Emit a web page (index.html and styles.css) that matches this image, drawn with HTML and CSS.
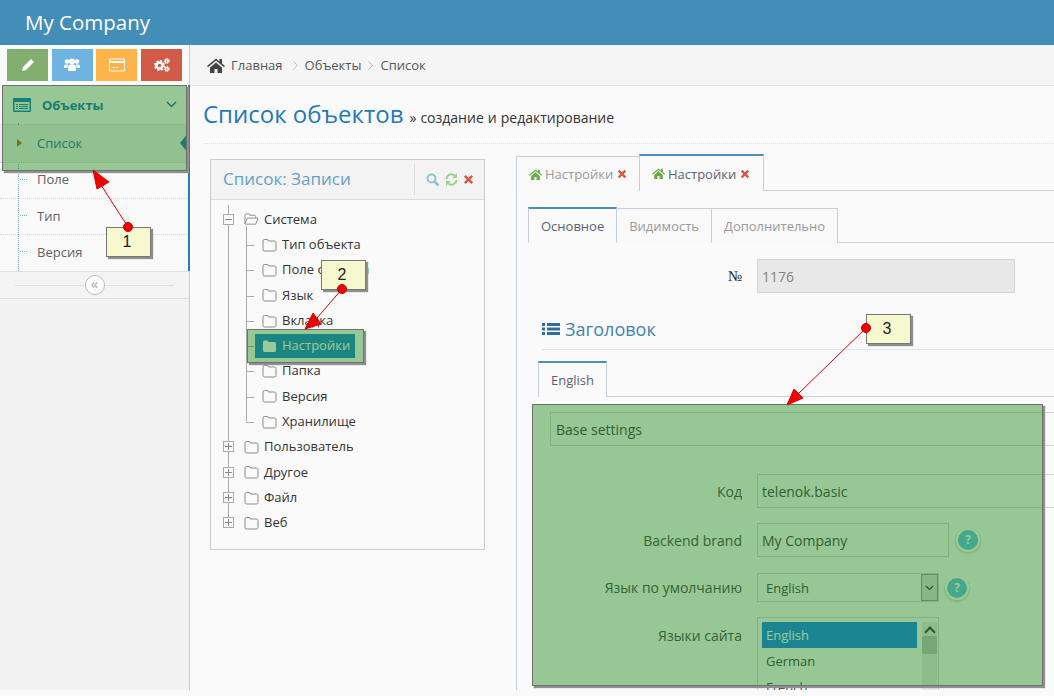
FILE: index.html
```html
<!DOCTYPE html>
<html lang="ru">
<head>
  <meta charset="UTF-8">
  <title>My Company</title>
  <link rel="stylesheet" href="styles.css">
</head>
<body>
  <svg class="icon-defs" width="0" height="0">
    <symbol id="i-folder" viewBox="0 0 15 14"><path d="M1 3.200q0-1.700 1.500-1.700h2.600q1.200 0 1.400 1.500h6q1.500 0 1.500 1.500v7q0 1.500-1.500 1.500h-10q-1.500 0-1.500-1.500z" fill="none" stroke="#8a8a8a"/></symbol>
    <symbol id="i-folder-solid" viewBox="0 0 15 14"><path d="M1 3.200q0-1.700 1.500-1.700h2.600q1.200 0 1.400 1.500h6q1.500 0 1.500 1.500v7q0 1.500-1.500 1.500h-10q-1.500 0-1.500-1.500z" fill="#fff"/></symbol>
    <symbol id="i-home" viewBox="0 0 18 15"><path d="M9 0.500 0 8l1 1.200L9 2.600l8 6.600L18 8l-3-2.500V1h-2.500v2.400zM3 9.500V15h4.500v-4h3v4H15V9.500L9 4.500z"/></symbol>
    <symbol id="i-times" viewBox="0 0 12 12"><path d="M3 1 6 4l3-3 2 2-3 3 3 3-2 2-3-3-3 3-2-2 3-3-3-3z"/></symbol>
    <symbol id="i-crumb" viewBox="0 0 5 9"><path d="M.5.5l4 4-4 4" fill="none" stroke="#bbb"/></symbol>
  </svg>

  <header class="navbar">My Company</header>

  <div class="layout">
    <aside class="sidebar">
      <div class="shortcuts">
        <span class="shortcut green">
          <svg width="14" height="14" viewBox="0 0 14 14"><path d="M10 1l3 3-8 8-4 1 1-4z" fill="#fff"/></svg>
        </span>
        <span class="shortcut blue">
          <svg width="16" height="14" viewBox="0 0 16 14"><g fill="#fff"><circle cx="3" cy="3.500" r="2.300"/><circle cx="13" cy="3.500" r="2.300"/><circle cx="8" cy="3.500" r="3"/><path d="M0 10V8q0-1.500 2-1.500h2L3 10zM16 10V8q0-1.500-2-1.500h-2l1 3.500zM4 13V9q0-2.500 2.500-2.500h3Q12 6.500 12 9v4z"/></g></svg>
        </span>
        <span class="shortcut orange">
          <svg width="16" height="14" viewBox="0 0 16 14"><path d="M.5 1h15v12H.5z" fill="none" stroke="#fff"/><path d="M1 3h14v2H1zM3 9h3v1H3zM7 9h2v1H7z" fill="#fff"/></svg>
        </span>
        <span class="shortcut red">
          <svg width="16" height="14" viewBox="0 0 16 14"><g fill="none" stroke="#fff"><circle cx="5.500" cy="7.500" r="3" stroke-width="2.400"/><circle cx="5.500" cy="7.500" r="4.700" stroke-width="1.600" stroke-dasharray="2 1.700"/><circle cx="12.800" cy="3" r="1.500" stroke-width="1.500"/><circle cx="12.800" cy="3" r="2.600" stroke-width="1" stroke-dasharray="1.200 1.200"/><circle cx="12.800" cy="11" r="1.500" stroke-width="1.500"/><circle cx="12.800" cy="11" r="2.600" stroke-width="1" stroke-dasharray="1.200 1.200"/></g></svg>
        </span>
      </div>

      <nav class="side-nav">
        <div class="nav-head">
          <svg class="nav-head-icon" width="18" height="14" viewBox="0 0 18 14"><path d="M1 0h16q1 0 1 1v12q0 1-1 1H1q-1 0-1-1V1q0-1 1-1zM1.500 4v8.500h15V4zM3 6h2v1H3zM6 6h9v1H6zM3 8h2v1H3zM6 8h9v1H6zM3 10h2v1H3zM6 10h9v1H6z" fill="#2283c5" fill-rule="evenodd"/></svg>
          <b>Объекты</b>
          <svg class="nav-chevron" width="11" height="7" viewBox="0 0 11 7"><path d="M1 1l4.500 4.500L10 1" fill="none" stroke="#3a6ea0" stroke-width="1.500"/></svg>
        </div>
        <ul class="sub-nav">
          <li class="active">Список</li>
          <li>Поле</li>
          <li class="low">Тип</li>
          <li class="low">Версия</li>
        </ul>
      </nav>

      <div class="side-toggle"><span class="toggle-btn">«</span></div>
    </aside>

    <main class="content">
      <div class="breadcrumbs">
        <svg class="crumb-home" width="18" height="15"><use href="#i-home"/></svg>
        <span>Главная</span>
        <svg class="crumb-sep wide" width="5" height="9"><use href="#i-crumb"/></svg>
        <span>Объекты</span>
        <svg class="crumb-sep" width="5" height="9"><use href="#i-crumb"/></svg>
        <span>Список</span>
      </div>

      <div class="page-head">
        <h1>Список объектов</h1>
        <small>» создание и редактирование</small>
      </div>

      <div class="columns">
        <section class="tree-box">
          <div class="tree-title">
            <h4>Список: Записи</h4>
            <div class="tree-tools">
              <svg width="14" height="14" viewBox="0 0 14 14"><circle cx="5.500" cy="5.500" r="4" fill="none" stroke="#8fc3d9" stroke-width="2"/><path d="M8.500 8.500l4 4" stroke="#8fc3d9" stroke-width="2.500"/></svg>
              <svg width="13" height="13" viewBox="0 0 13 13"><g fill="none" stroke="#9ed08f" stroke-width="2"><path d="M1.500 6A5 5 0 0 1 10 2.800"/><path d="M11.500 7A5 5 0 0 1 3 10.200"/></g><path d="M12 0v5H7zM1 13V8h5z" fill="#9ed08f"/></svg>
              <svg class="times" width="11" height="11"><use href="#i-times"/></svg>
            </div>
          </div>

          <ul class="tree">
            <li class="node open">
              <span class="toggle minus"></span>
              <svg class="folder" width="15" height="14" viewBox="0 0 16 14"><path d="M1 12V3q0-1.500 1.500-1.500h2.500q1 0 1.300 1.500h4.700q1.500 0 1.500 1.500V6M1 12l2.500-6H15l-2.500 6.500H2q-1 0-1-.5z" fill="none" stroke="#8a8a8a"/></svg>
              Система
            </li>
            <li>
              <ul class="tree-sub">
                <li class="node"><svg class="folder" width="15" height="14"><use href="#i-folder"/></svg>Тип объекта</li>
                <li class="node"><svg class="folder" width="15" height="14"><use href="#i-folder"/></svg>Поле объекта</li>
                <li class="node"><svg class="folder" width="15" height="14"><use href="#i-folder"/></svg>Язык</li>
                <li class="node"><svg class="folder" width="15" height="14"><use href="#i-folder"/></svg>Вкладка</li>
                <li class="node"><span class="selected"><svg class="folder" width="15" height="14"><use href="#i-folder-solid"/></svg>Настройки</span></li>
                <li class="node"><svg class="folder" width="15" height="14"><use href="#i-folder"/></svg>Папка</li>
                <li class="node"><svg class="folder" width="15" height="14"><use href="#i-folder"/></svg>Версия</li>
                <li class="node"><svg class="folder" width="15" height="14"><use href="#i-folder"/></svg>Хранилище</li>
              </ul>
            </li>
            <li class="node"><span class="toggle"></span><svg class="folder" width="15" height="14"><use href="#i-folder"/></svg>Пользователь</li>
            <li class="node"><span class="toggle"></span><svg class="folder" width="15" height="14"><use href="#i-folder"/></svg>Другое</li>
            <li class="node"><span class="toggle"></span><svg class="folder" width="15" height="14"><use href="#i-folder"/></svg>Файл</li>
            <li class="node"><span class="toggle"></span><svg class="folder" width="15" height="14"><use href="#i-folder"/></svg>Веб</li>
          </ul>
        </section>

        <section class="editor">
          <div class="tabs top-tabs">
            <span class="tab">
              <svg class="tab-home" width="13" height="11"><use href="#i-home"/></svg>Настройки<svg class="times" width="10" height="10"><use href="#i-times"/></svg>
            </span>
            <span class="tab active">
              <svg class="tab-home" width="13" height="11"><use href="#i-home"/></svg>Настройки<svg class="times" width="10" height="10"><use href="#i-times"/></svg>
            </span>
          </div>

          <div class="editor-body">
            <div class="tabs inner-tabs">
              <span class="tab active">Основное</span>
              <span class="tab">Видимость</span>
              <span class="tab">Дополнительно</span>
            </div>

            <div class="form-row number-row">
              <label>№</label>
              <input class="field number" value="1176" disabled>
            </div>

            <h3 class="section-title">
              <svg width="18" height="14" viewBox="0 0 18 14"><path d="M0 1h3v3H0zM5 1h13v3H5zM0 5.500h3v3H0zM5 5.500h13v3H5zM0 10h3v3H0zM5 10h13v3H5z" fill="#2e6da4"/></svg>
              Заголовок
            </h3>

            <div class="tabs lang-tabs">
              <span class="tab active">English</span>
            </div>

            <div class="lang-body">
              <input class="field heading" value="Base settings">

              <div class="form-row code-row">
                <label>Код</label>
                <input class="field wide" value="telenok.basic">
              </div>

              <div class="form-row brand-row">
                <label>Backend brand</label>
                <input class="field brand" value="My Company">
                <span class="help">?</span>
              </div>

              <div class="form-row select-row">
                <label>Язык по умолчанию</label>
                <div class="select">
                  English
                  <span class="select-arrow"><svg width="9" height="6" viewBox="0 0 9 6"><path d="M1 1l3.500 3.500L8 1" fill="none" stroke="#444" stroke-width="1.200"/></svg></span>
                </div>
                <span class="help">?</span>
              </div>

              <div class="form-row list-row">
                <label>Языки сайта</label>
                <div class="listbox">
                  <ul class="options">
                    <li class="picked">English</li>
                    <li>German</li>
                    <li>French</li>
                  </ul>
                  <div class="scroll"><span class="scroll-up"></span><span class="scroll-thumb"></span></div>
                </div>
              </div>
            </div>
          </div>
        </section>
      </div>
    </main>
  </div>

  <!-- annotations drawn over the screenshot -->
  <div class="mark mark-nav"></div>
  <div class="mark mark-tree"></div>
  <div class="mark mark-form"></div>

  <svg class="arrows" width="1054" height="696" viewBox="0 0 1054 696">
    <g stroke="#e00000" fill="#f00000">
      <path d="M128 227 101 185"/>
      <path d="M93 170 97 189 109 182z"/>
      <path d="M342 289 317 318"/>
      <path d="M305 329 313 313 321 324z"/>
      <path d="M866 328 798 394"/>
      <path d="M787 405 794 389 803 398z"/>
    </g>
  </svg>

  <div class="note note-1">1</div>
  <div class="note note-2">2</div>
  <div class="note note-3">3</div>
  <svg class="dots" width="1054" height="696" viewBox="0 0 1054 696">
    <g fill="#f00000" stroke="#c00000">
      <circle cx="128" cy="227" r="4.500"/>
      <circle cx="342" cy="289" r="4.500"/>
      <circle cx="866" cy="328" r="4.500"/>
    </g>
  </svg>
</body>
</html>
```

FILE: styles.css
```css
* {
  margin: 0;
  padding: 0;
  box-sizing: border-box;
}

html, body {
  height: 696px;
  overflow: hidden;
}

body {
  position: relative;
  background: #fafafa;
  color: #393939;
  font-family: "Open Sans", sans-serif;
  font-size: 13px;
}

ul {
  list-style: none;
}

.icon-defs {
  position: absolute;
}

/* Top bar */
.navbar {
  height: 45px;
  padding: 8px 0 0 25px;
  background: #438eb9;
  color: #fff;
  font-size: 20.500px;
  line-height: 28px;
}

.layout {
  display: flex;
  height: 645px;
  overflow: hidden;
}

/* Sidebar */
.sidebar {
  flex: 0 0 190px;
  background: #f2f2f2;
  border-right: 1px solid #ccc;
}

.shortcuts {
  display: flex;
  height: 40px;
  padding: 4px 0 0 7px;
  gap: 3.700px;
  background: #fafafa;
}

.shortcut {
  display: flex;
  align-items: center;
  justify-content: center;
  width: 41px;
  height: 32px;
}

.green { background: #82af6f; }
.blue { background: #6fb3e0; }
.orange { background: #ffb44b; }
.red { background: #d15b47; }

.side-nav {
  border-right: 2px solid #2b7dbc;
  margin-right: -1px;
  background: #fafafa;
}

.nav-head {
  display: flex;
  align-items: center;
  height: 40px;
  padding: 0 11px 0 13px;
  border-bottom: 1px solid #e5e5e5;
  color: #2b7dbc;
}

.nav-head-icon {
  margin-right: 11px;
}

.nav-chevron {
  margin-left: auto;
}

.sub-nav {
  position: relative;
}

.sub-nav::before {
  content: "";
  position: absolute;
  left: 18px;
  top: -2px;
  bottom: 0;
  border-left: 1px dotted #6fb3e0;
}

.sub-nav li {
  position: relative;
  height: 36px;
  padding-left: 37px;
  border-bottom: 1px dotted #d5d5d5;
  color: #616161;
  line-height: 33px;
}

.sub-nav .low {
  line-height: 35px;
}

.sub-nav li:last-child {
  border-bottom: 0;
}

.sub-nav li::before {
  content: "";
  position: absolute;
  left: 20px;
  top: 16px;
  width: 7px;
  border-top: 1px dotted #6fb3e0;
}

.sub-nav .active {
  height: 38px;
  background: #f0f0f0;
  color: #2b7dbc;
  line-height: 36px;
}

.sub-nav .active::before {
  left: 17px;
  top: 14px;
  width: 0;
  border: 0;
  border-left: 5px solid #c87020;
  border-top: 4px solid transparent;
  border-bottom: 4px solid transparent;
}

.sub-nav .active::after {
  content: "";
  position: absolute;
  right: 0;
  top: 8px;
  border: 10px solid transparent;
  border-left: 0;
  border-right: 8px solid #2b7dbc;
}

.side-toggle {
  position: relative;
  display: flex;
  justify-content: center;
  align-items: center;
  height: 28px;
  background: #f3f3f3;
  border-top: 1px solid #e0e0e0;
  border-bottom: 1px solid #e0e0e0;
}

.side-toggle::before {
  content: "";
  position: absolute;
  left: 15px;
  right: 15px;
  top: 13px;
  border-top: 1px solid #e0e0e0;
}

.toggle-btn {
  position: relative;
  width: 20px;
  height: 20px;
  border: 1px solid #bbb;
  border-radius: 50%;
  background: #fff;
  color: #aaa;
  font-size: 15px;
  line-height: 15px;
  text-align: center;
}

/* Main column */
.content {
  flex: 1;
  min-width: 0;
  overflow: hidden;
}

.breadcrumbs {
  display: flex;
  align-items: center;
  height: 41px;
  padding-left: 17px;
  background: #f5f5f5;
  border-bottom: 1px solid #e5e5e5;
  color: #555;
}

.crumb-home {
  margin-right: 6px;
  fill: #444;
}

.crumb-sep {
  margin: 0 7px;
}

.crumb-sep.wide {
  margin: 0 7px 0 10px;
}

.page-head {
  display: flex;
  align-items: baseline;
  gap: 6px;
  height: 58px;
  margin-left: 13px;
  padding-top: 11px;
  border-bottom: 1px dotted #e2e2e2;
}

.page-head h1 {
  color: #2679b5;
  font-size: 24px;
  font-weight: 400;
  line-height: 34px;
}

.page-head small {
  color: #333;
  font-size: 14px;
  word-spacing: 0.400px;
}

.columns {
  display: flex;
  align-items: flex-start;
  padding: 15px 0 0 20px;
}

/* Tree */
.tree-box {
  flex: 0 0 275px;
  height: 391px;
  border: 1px solid #ccc;
}

.tree-title {
  display: flex;
  align-items: center;
  height: 40px;
  padding-left: 12px;
  background: #f3f3f3;
  border-bottom: 1px solid #ddd;
}

.tree-title h4 {
  flex: 1;
  padding-bottom: 2px;
  color: #669fc7;
  font-size: 17px;
  font-weight: 400;
}

.tree-tools {
  display: flex;
  align-items: center;
  gap: 5px;
  width: 70px;
  height: 31px;
  padding-left: 11px;
  border-left: 1px solid #ddd;
}

.times {
  fill: #d15b47;
}

.tree {
  position: relative;
  padding: 6.700px 0 0 33px;
  line-height: 25.300px;
}

.tree::before {
  content: "";
  position: absolute;
  left: 17px;
  top: 5px;
  height: 318px;
  border-left: 1px solid #aaa;
}

.node {
  position: relative;
  display: flex;
  align-items: center;
  height: 25.300px;
  color: #333;
}

.folder {
  flex: none;
  margin-right: 5px;
}

.toggle {
  position: absolute;
  left: -21px;
  top: 7px;
  width: 11px;
  height: 11px;
  border: 1px solid #aaa;
  background: #fafafa;
}

.toggle::before {
  content: "";
  position: absolute;
  left: 1px;
  right: 1px;
  top: 4px;
  border-top: 1px solid #888;
}

.toggle::after {
  content: "";
  position: absolute;
  top: 1px;
  bottom: 1px;
  left: 4px;
  border-left: 1px solid #888;
}

.toggle.minus::after {
  display: none;
}

.tree-sub {
  position: relative;
  padding-left: 18px;
}

.tree-sub::before {
  content: "";
  position: absolute;
  left: 2px;
  top: -6px;
  height: 195px;
  border-left: 1px solid #aaa;
}

.tree-sub .node::before {
  content: "";
  position: absolute;
  left: -16px;
  top: 13px;
  width: 8px;
  border-top: 1px solid #aaa;
}

.selected {
  display: flex;
  align-items: center;
  height: 24px;
  margin-left: -7px;
  padding: 0 5px 0 7px;
  background: #2a8cd8;
  color: #fff;
}

/* Right side */
.editor {
  flex: none;
  width: 600px;
  margin-left: 31px;
  margin-top: -4px;
}

.tabs {
  display: flex;
  align-items: flex-end;
  border-bottom: 1px solid #c5d0dc;
  color: #999;
}

.tab {
  position: relative;
  display: flex;
  align-items: center;
  background: #f9f9f9;
  border: 1px solid #c5d0dc;
  border-bottom: 0;
  margin-bottom: -1px;
}

.tab.active {
  background: #fafafa;
  border-top: 2px solid #4c8fbd;
  color: #576373;
}

.top-tabs {
  height: 36px;
}

.top-tabs .tab {
  width: 124px;
  height: 35px;
  padding-left: 12px;
}

.top-tabs .tab.active {
  width: 125px;
  height: 37px;
  margin-left: -1px;
}

.tab-home {
  margin-right: 3px;
  fill: #69aa46;
}

.top-tabs .times {
  margin-left: 4px;
}

.editor-body {
  height: 500px;
  padding: 16px 0 0 11px;
  border-left: 1px solid #c5d0dc;
}

.inner-tabs {
  height: 36px;
}

.inner-tabs .tab {
  height: 35px;
  padding: 0 12px;
  margin-left: -1px;
}

.inner-tabs .tab:first-child {
  height: 36px;
  margin-left: 0;
}

.form-row {
  display: flex;
  align-items: center;
}

.form-row label {
  flex: none;
  width: 214px;
  margin-right: 15px;
  color: #555;
  font-size: 14px;
  text-align: right;
}

.field {
  display: block;
  height: 34px;
  padding: 0 4px;
  background: #fafafa;
  border: 1px solid #d5d5d5;
  color: #4e4e4e;
  font-family: "Open Sans", sans-serif;
  font-size: 14px;
}

.number-row {
  margin-top: 16px;
}

.number-row label {
  color: #222;
  font-family: "Liberation Serif", serif;
  font-size: 15px;
}

.field.number {
  width: 258px;
  background: #e8e8e8;
  color: #848484;
}

.section-title {
  display: flex;
  align-items: center;
  gap: 5px;
  height: 57px;
  margin: 0 0 11px 14px;
  padding-top: 16px;
  border-bottom: 1px solid #dce8f1;
  color: #4383b4;
  font-size: 18px;
  font-weight: 400;
  white-space: nowrap;
}

.lang-tabs {
  height: 36px;
  margin-left: 10px;
}

.lang-tabs .tab {
  height: 36px;
  padding: 0 12px;
}

.lang-body {
  padding: 15px 0 0 22px;
}

.lang-body .form-row label {
  width: 192px;
}

.field.heading {
  width: 520px;
  padding: 0 5px;
}

.code-row {
  margin-top: 28px;
}

.field.wide {
  width: 320px;
}

.brand-row {
  margin-top: 15px;
}

.field.brand {
  width: 192px;
}

.help {
  width: 20px;
  height: 20px;
  margin-left: 9px;
  border-radius: 50%;
  background: #6fc6e8;
  box-shadow: 0 0 0 2px #fff, 0 1px 1px 3px #ddd;
  color: #fff;
  font-size: 12px;
  font-weight: 700;
  line-height: 20px;
  text-align: center;
}

.select-row {
  margin-top: 16px;
}

.select-row .help {
  margin-left: 8px;
}

.select {
  display: flex;
  align-items: center;
  justify-content: space-between;
  width: 182px;
  height: 29px;
  padding-left: 8px;
  border: 1px solid #d5d5d5;
  color: #4e4e4e;
  font-size: 13px;
}

.select-arrow {
  display: flex;
  align-items: center;
  justify-content: center;
  width: 17px;
  height: 27px;
  background: #dfdfdf;
  border: 1px solid #a0a0a0;
}

.list-row {
  align-items: flex-start;
  margin-top: 15px;
}

.list-row label {
  margin-top: 9px;
}

.listbox {
  display: flex;
  justify-content: space-between;
  width: 182px;
  height: 73px;
  padding: 4px 1px 0 4px;
  border: 1px solid #d5d5d5;
  border-bottom: 0;
  overflow: hidden;
  color: #4e4e4e;
  font-size: 13px;
}

.options li {
  width: 155px;
  height: 26px;
  padding-left: 4px;
  line-height: 26px;
}

.options .picked {
  background: #288bf0;
  color: #fff;
}

.scroll {
  width: 15px;
  background: #e8e8e8;
}

.scroll-up {
  display: block;
  height: 14px;
  background: #e8e8e8;
  position: relative;
}

.scroll-up::before {
  content: "";
  position: absolute;
  left: 4px;
  top: 6px;
  width: 6px;
  height: 6px;
  border-left: 2px solid #444;
  border-top: 2px solid #444;
  transform: rotate(45deg);
}

.scroll-thumb {
  display: block;
  height: 18px;
  background: #c5c5c5;
}

/* Annotations */
.mark {
  position: absolute;
  background: rgba(5, 122, 0, 0.4);
  border: 1px solid #6f6f6f;
  box-shadow: 2px 2px 1px #8f8f8f;
}

.mark-nav {
  left: 2px;
  top: 85px;
  width: 185px;
  height: 86px;
}

.mark-tree {
  left: 247px;
  top: 329px;
  width: 117px;
  height: 34px;
}

.mark-form {
  left: 532px;
  top: 404px;
  width: 511px;
  height: 282px;
}

.arrows, .dots {
  position: absolute;
  left: 0;
  top: 0;
}

.note {
  position: absolute;
  width: 45px;
  height: 30px;
  padding-right: 3px;
  background: #f8f8cf;
  border: 1px solid #777;
  box-shadow: 2px 2px 1px #8f8f8f;
  color: #222;
  font-family: "Liberation Sans", sans-serif;
  font-size: 16px;
  line-height: 28px;
  text-align: center;
}

.note-1 {
  left: 106px;
  top: 227px;
}

.note-2 {
  left: 321px;
  top: 260px;
}

.note-3 {
  left: 866px;
  top: 314px;
}
```
